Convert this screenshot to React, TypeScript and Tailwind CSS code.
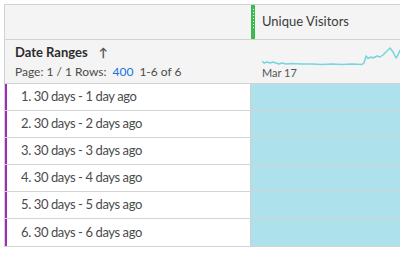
import React from "react";

const rows = [
  "1. 30 days - 1 day ago",
  "2. 30 days - 2 days ago",
  "3. 30 days - 3 days ago",
  "4. 30 days - 4 days ago",
  "5. 30 days - 5 days ago",
  "6. 30 days - 6 days ago",
];

const spark =
  "M0,21 L2,23 L5,22 L8,23 L11,22 L14,23 L17,24 L20,23 L24,24 L30,23.5 L40,24 L50,24 L60,24.5 L70,24 L80,24.5 L90,24 L100,24.5 L102,23 L104,16 L106,18.5 L109,17 L111,18 L115,16 L118,17 L121,15 L124,12 L128,8 L131,12 L134,18 L136,15 L138,10";

export default function App() {
  return (
    <div className="w-[400px] h-[253px] overflow-hidden bg-white pl-[4px] pt-[4px]" style={{ fontFamily: "Lato, 'Open Sans', sans-serif" }}>
      <div className="w-[420px] border-l border-t border-b border-[#d3d3d3] flex flex-col">
        {/* top row */}
        <div className="flex h-[35px] bg-[#f4f4f4] border-b border-[#d3d3d3]">
          <div className="w-[246px] shrink-0" />
          <div className="w-[4px] bg-[#3dba4f] flex flex-col items-center pt-[4px] gap-[2px]">
            {[0, 1, 2, 3, 4, 5, 6].map((i) => (
              <div key={i} className="w-[1px] h-[1px] bg-white" />
            ))}
          </div>
          <div className="flex items-center pl-[7px] text-[13px] text-[#3b3b3b]">Unique Visitors</div>
        </div>
        {/* header */}
        <div className="flex h-[44px] bg-[#f4f4f4] border-b border-[#d3d3d3]">
          <div className="w-[246px] shrink-0 pl-[10px] pt-[3px] flex flex-col">
            <div className="flex items-center h-[20px] text-[13px] font-bold text-[#2c2c2c]">
              <span>Date Ranges</span>
              <span className="ml-[11px] font-bold text-[12px] text-[#555]">↑</span>
            </div>
            <div className="flex items-center h-[18px] text-[12px] text-[#4b4b4b]">
              <span>Page: 1 / 1 Rows:</span>
              <span className="ml-[6px] text-[#1473e6]">400</span>
              <span className="ml-[6px]">1-6 of 6</span>
            </div>
          </div>
          <div className="flex-1 relative">
            <svg className="absolute left-[11px] top-0" width="160" height="30" viewBox="0 0 160 30">
              <path d={spark} fill="none" stroke="#76d5de" strokeWidth="1.5" strokeLinejoin="round" />
            </svg>
            <div className="absolute left-[11px] top-[25px] text-[11px] text-[#555]">Mar 17</div>
          </div>
        </div>
        {rows.map((r) => (
          <div key={r} className="flex h-[27px] border-b border-[#d3d3d3] last:border-b-0">
            <div className="w-[246px] shrink-0 bg-white border-l-[2px] border-[#a12bbb] flex items-center pl-[14px] text-[13px] tracking-[-0.4px] text-[#4b4b4b] border-r border-r-[#cfcfcf]">
              {r}
            </div>
            <div className="flex-1 bg-[#ade1ec]" />
          </div>
        ))}
      </div>
    </div>
  );
}
